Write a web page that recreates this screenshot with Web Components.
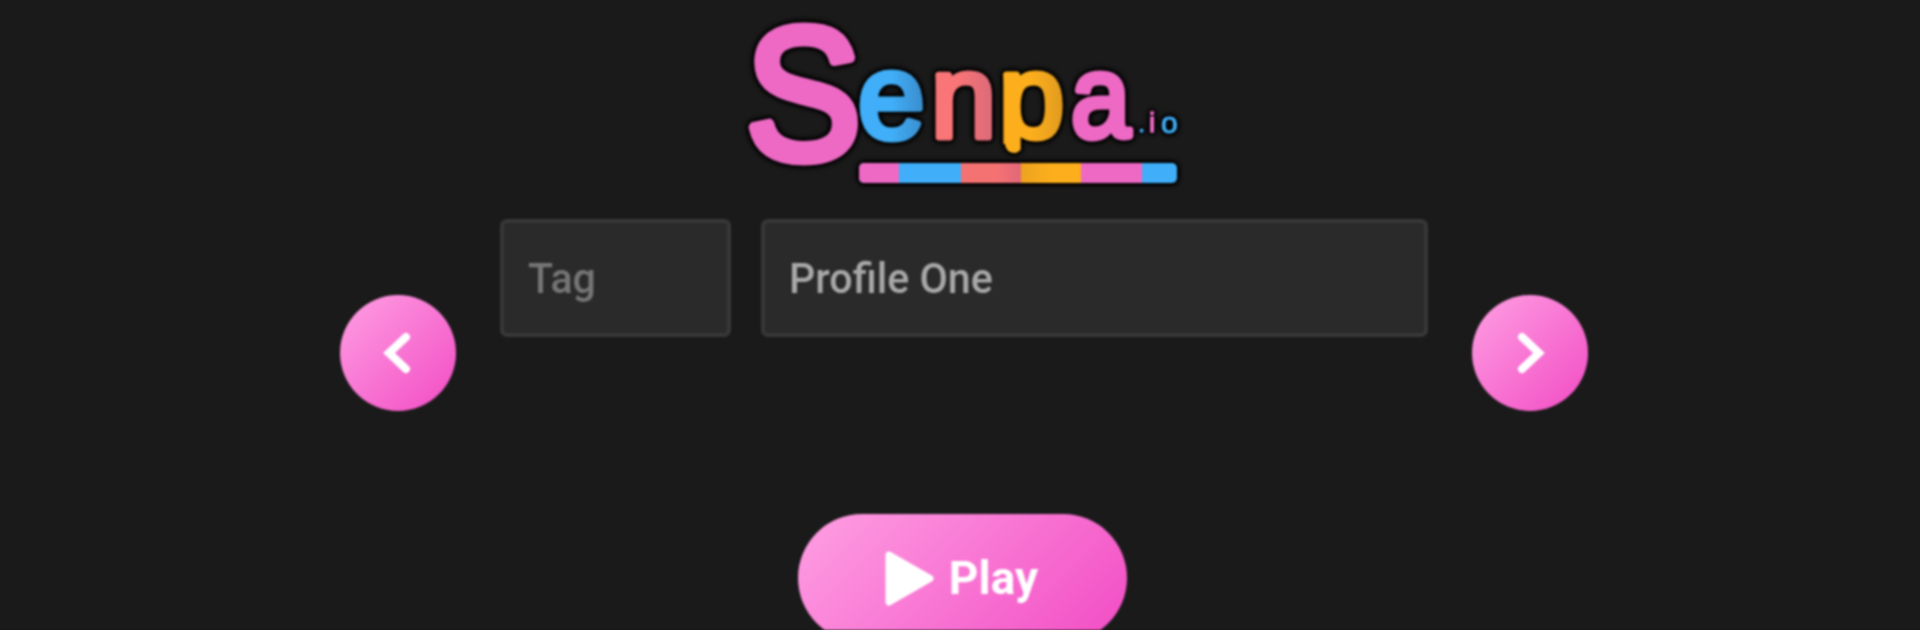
<!DOCTYPE html>
<html>
<head>
<meta charset="utf-8">
<title>Senpa.io</title>
<style>
  html, body { margin: 0; height: 630px; overflow: hidden; background: #1a1a1a; }
</style>
</head>
<body>
<senpa-menu>
  <senpa-logo></senpa-logo>
  <profile-panel>
    <round-arrow slot="prev" dir="left"></round-arrow>
    <text-field slot="tag" class="tag" placeholder>Tag</text-field>
    <text-field slot="name">Profile One</text-field>
    <round-arrow slot="next" dir="right"></round-arrow>
  </profile-panel>
  <play-button>Play</play-button>
</senpa-menu>

<script>
// outer page column, the reference is an upscaled page so everything gets a little blur
class SenpaMenu extends HTMLElement {
  constructor() {
    super();
    this.attachShadow({ mode: 'open' }).innerHTML = `
      <style>
        :host {
          display: flex;
          flex-direction: column;
          width: 1920px;
          height: 630px;
          overflow: hidden;
          background: #1a1a1a;
          font-family: Roboto, "Liberation Sans", sans-serif;
          filter: blur(0.8px);
        }
      </style>
      <slot></slot>
    `;
  }
}

class SenpaLogo extends HTMLElement {
  constructor() {
    super();
    this.attachShadow({ mode: 'open' }).innerHTML = `
      <style>
        :host { display: block; width: 444px; height: 190px; margin: 8px 0 21px 742px; flex: none; }
        svg { display: block; overflow: visible; filter: drop-shadow(0 0 2px #000) drop-shadow(0 0 2px #000) drop-shadow(0 0 1px #000); }
        text { font-family: "Liberation Sans", Arial, sans-serif; stroke-linejoin: round; stroke-linecap: round; }
      </style>
      <svg width="444" height="190" viewBox="0 0 444 190">
        <defs>
          <linearGradient id="e"><stop offset=".5" stop-color="#40aef8"/><stop offset="1" stop-color="#3a8ccb"/></linearGradient>
          <linearGradient id="n"><stop offset=".4" stop-color="#f97577"/><stop offset="1" stop-color="#d9697a"/></linearGradient>
          <linearGradient id="p"><stop offset=".5" stop-color="#fcae1c"/><stop offset="1" stop-color="#e09a20"/></linearGradient>
          <linearGradient id="s"><stop offset="0" stop-color="#f57272"/><stop offset=".6" stop-color="#f57272"/><stop offset="1" stop-color="#e0687a"/></linearGradient>
          <linearGradient id="o"><stop offset="0" stop-color="#eca320"/><stop offset=".5" stop-color="#fcae1c"/></linearGradient>
          <clipPath id="pclip">
            <rect x="250" y="0" width="100" height="136"/>
            <rect x="263" y="60" width="18" height="85" rx="9"/>
          </clipPath>
        </defs>
        <text transform="translate(4 150) scale(.93 1)" font-size="185" fill="#ed69c4" stroke="#ed69c4" stroke-width="11">S</text>
        <text x="116" y="130" font-size="120" fill="url(#e)" stroke="url(#e)" stroke-width="7">e</text>
        <text x="189" y="128.5" font-size="117" fill="url(#n)" stroke="url(#n)" stroke-width="7">n</text>
        <text x="257" y="128.5" font-size="117" fill="url(#p)" stroke="url(#p)" stroke-width="7" clip-path="url(#pclip)">p</text>
        <text transform="translate(329 128.5) scale(.91 1)" font-size="117" fill="#ed69c4" stroke="#ed69c4" stroke-width="7">a</text>
        <text x="396" y="124" font-size="26" fill="#40aef8" stroke="#40aef8" stroke-width="1">.</text><text x="407" y="124" font-size="28" fill="#ed69c4" stroke="#ed69c4" stroke-width="1.5">i</text><text x="419" y="125" font-size="30" fill="#40aef8" stroke="#40aef8" stroke-width="1">o</text>
        <g>
          <rect x="117" y="155" width="318" height="20" rx="5" fill="#40aef8"/>
          <path d="M122 155H157V175H122a5 5 0 0 1-5-5V160a5 5 0 0 1 5-5z" fill="#ed69c4"/>
          <rect x="219" y="155" width="60" height="20" fill="url(#s)"/>
          <rect x="279" y="155" width="60" height="20" fill="url(#o)"/>
          <rect x="339" y="155" width="61" height="20" fill="#ed69c4"/>
        </g>
      </svg>
    `;
  }
}

// carousel row: arrows are centred on the whole panel, the fields sit at its top
class ProfilePanel extends HTMLElement {
  constructor() {
    super();
    this.attachShadow({ mode: 'open' }).innerHTML = `
      <style>
        :host {
          display: flex;
          align-items: center;
          gap: 44px;
          width: 1248px;
          height: 267px;
          margin-left: 340px;
          flex: none;
        }
        .fields {
          flex: 1;
          align-self: flex-start;
          display: flex;
          gap: 30px;
        }
      </style>
      <slot name="prev"></slot>
      <div class="fields">
        <slot name="tag"></slot>
        <slot name="name"></slot>
      </div>
      <slot name="next"></slot>
    `;
  }
}

class RoundArrow extends HTMLElement {
  connectedCallback() {
    const d = this.getAttribute('dir') === 'left' ? 'M66 42L49 58L66 74' : 'M50 42L67 58L50 74';
    this.shadowRoot || this.attachShadow({ mode: 'open' });
    this.shadowRoot.innerHTML = `
      <style>
        :host {
          display: block;
          flex: none;
          width: 116px;
          height: 116px;
          border-radius: 50%;
          background: linear-gradient(135deg, #ff9fe3, #f24cc4);
        }
        svg { display: block; }
      </style>
      <svg width="116" height="116" viewBox="0 0 116 116">
        <path d="${d}" fill="none" stroke="#fff" stroke-width="8" stroke-linecap="round" stroke-linejoin="miter"/>
      </svg>
    `;
  }
}

class TextField extends HTMLElement {
  constructor() {
    super();
    this.attachShadow({ mode: 'open' }).innerHTML = `
      <style>
        :host {
          display: flex;
          align-items: center;
          box-sizing: border-box;
          height: 118px;
          padding-left: 24px;
          background: #2a2a2a;
          border: 4px solid #373737;
          border-radius: 7px;
          color: #a8a8a8;
          font-size: 42px;
          font-weight: 500;
        }
        :host([placeholder]) { color: #757575; }
        :host(.tag) { width: 231px; }
        :host(:not(.tag)) { width: 667px; }
        span { display: inline-block; transform: scaleX(.98); transform-origin: left center; white-space: nowrap; }
      </style>
      <span><slot></slot></span>
    `;
  }
}

class PlayButton extends HTMLElement {
  constructor() {
    super();
    this.attachShadow({ mode: 'open' }).innerHTML = `
      <style>
        :host {
          display: flex;
          align-items: center;
          justify-content: center;
          gap: 14px;
          box-sizing: border-box;
          flex: none;
          width: 329px;
          height: 128px;
          margin: 28px 0 0 798px;
          padding-right: 2px;
          border-radius: 64px;
          background: linear-gradient(135deg, #ff9fe3, #f24cc4);
          color: #fff;
          font-size: 46px;
          font-weight: 700;
        }
        svg { display: block; }
      </style>
      <svg width="50" height="57" viewBox="0 0 50 57">
        <path d="M4 5L45 28.5L4 52Z" fill="#fff" stroke="#fff" stroke-width="7" stroke-linejoin="round"/>
      </svg>
      <span><slot></slot></span>
    `;
  }
}

customElements.define('senpa-menu', SenpaMenu);
customElements.define('senpa-logo', SenpaLogo);
customElements.define('profile-panel', ProfilePanel);
customElements.define('round-arrow', RoundArrow);
customElements.define('text-field', TextField);
customElements.define('play-button', PlayButton);
</script>
</body>
</html>
